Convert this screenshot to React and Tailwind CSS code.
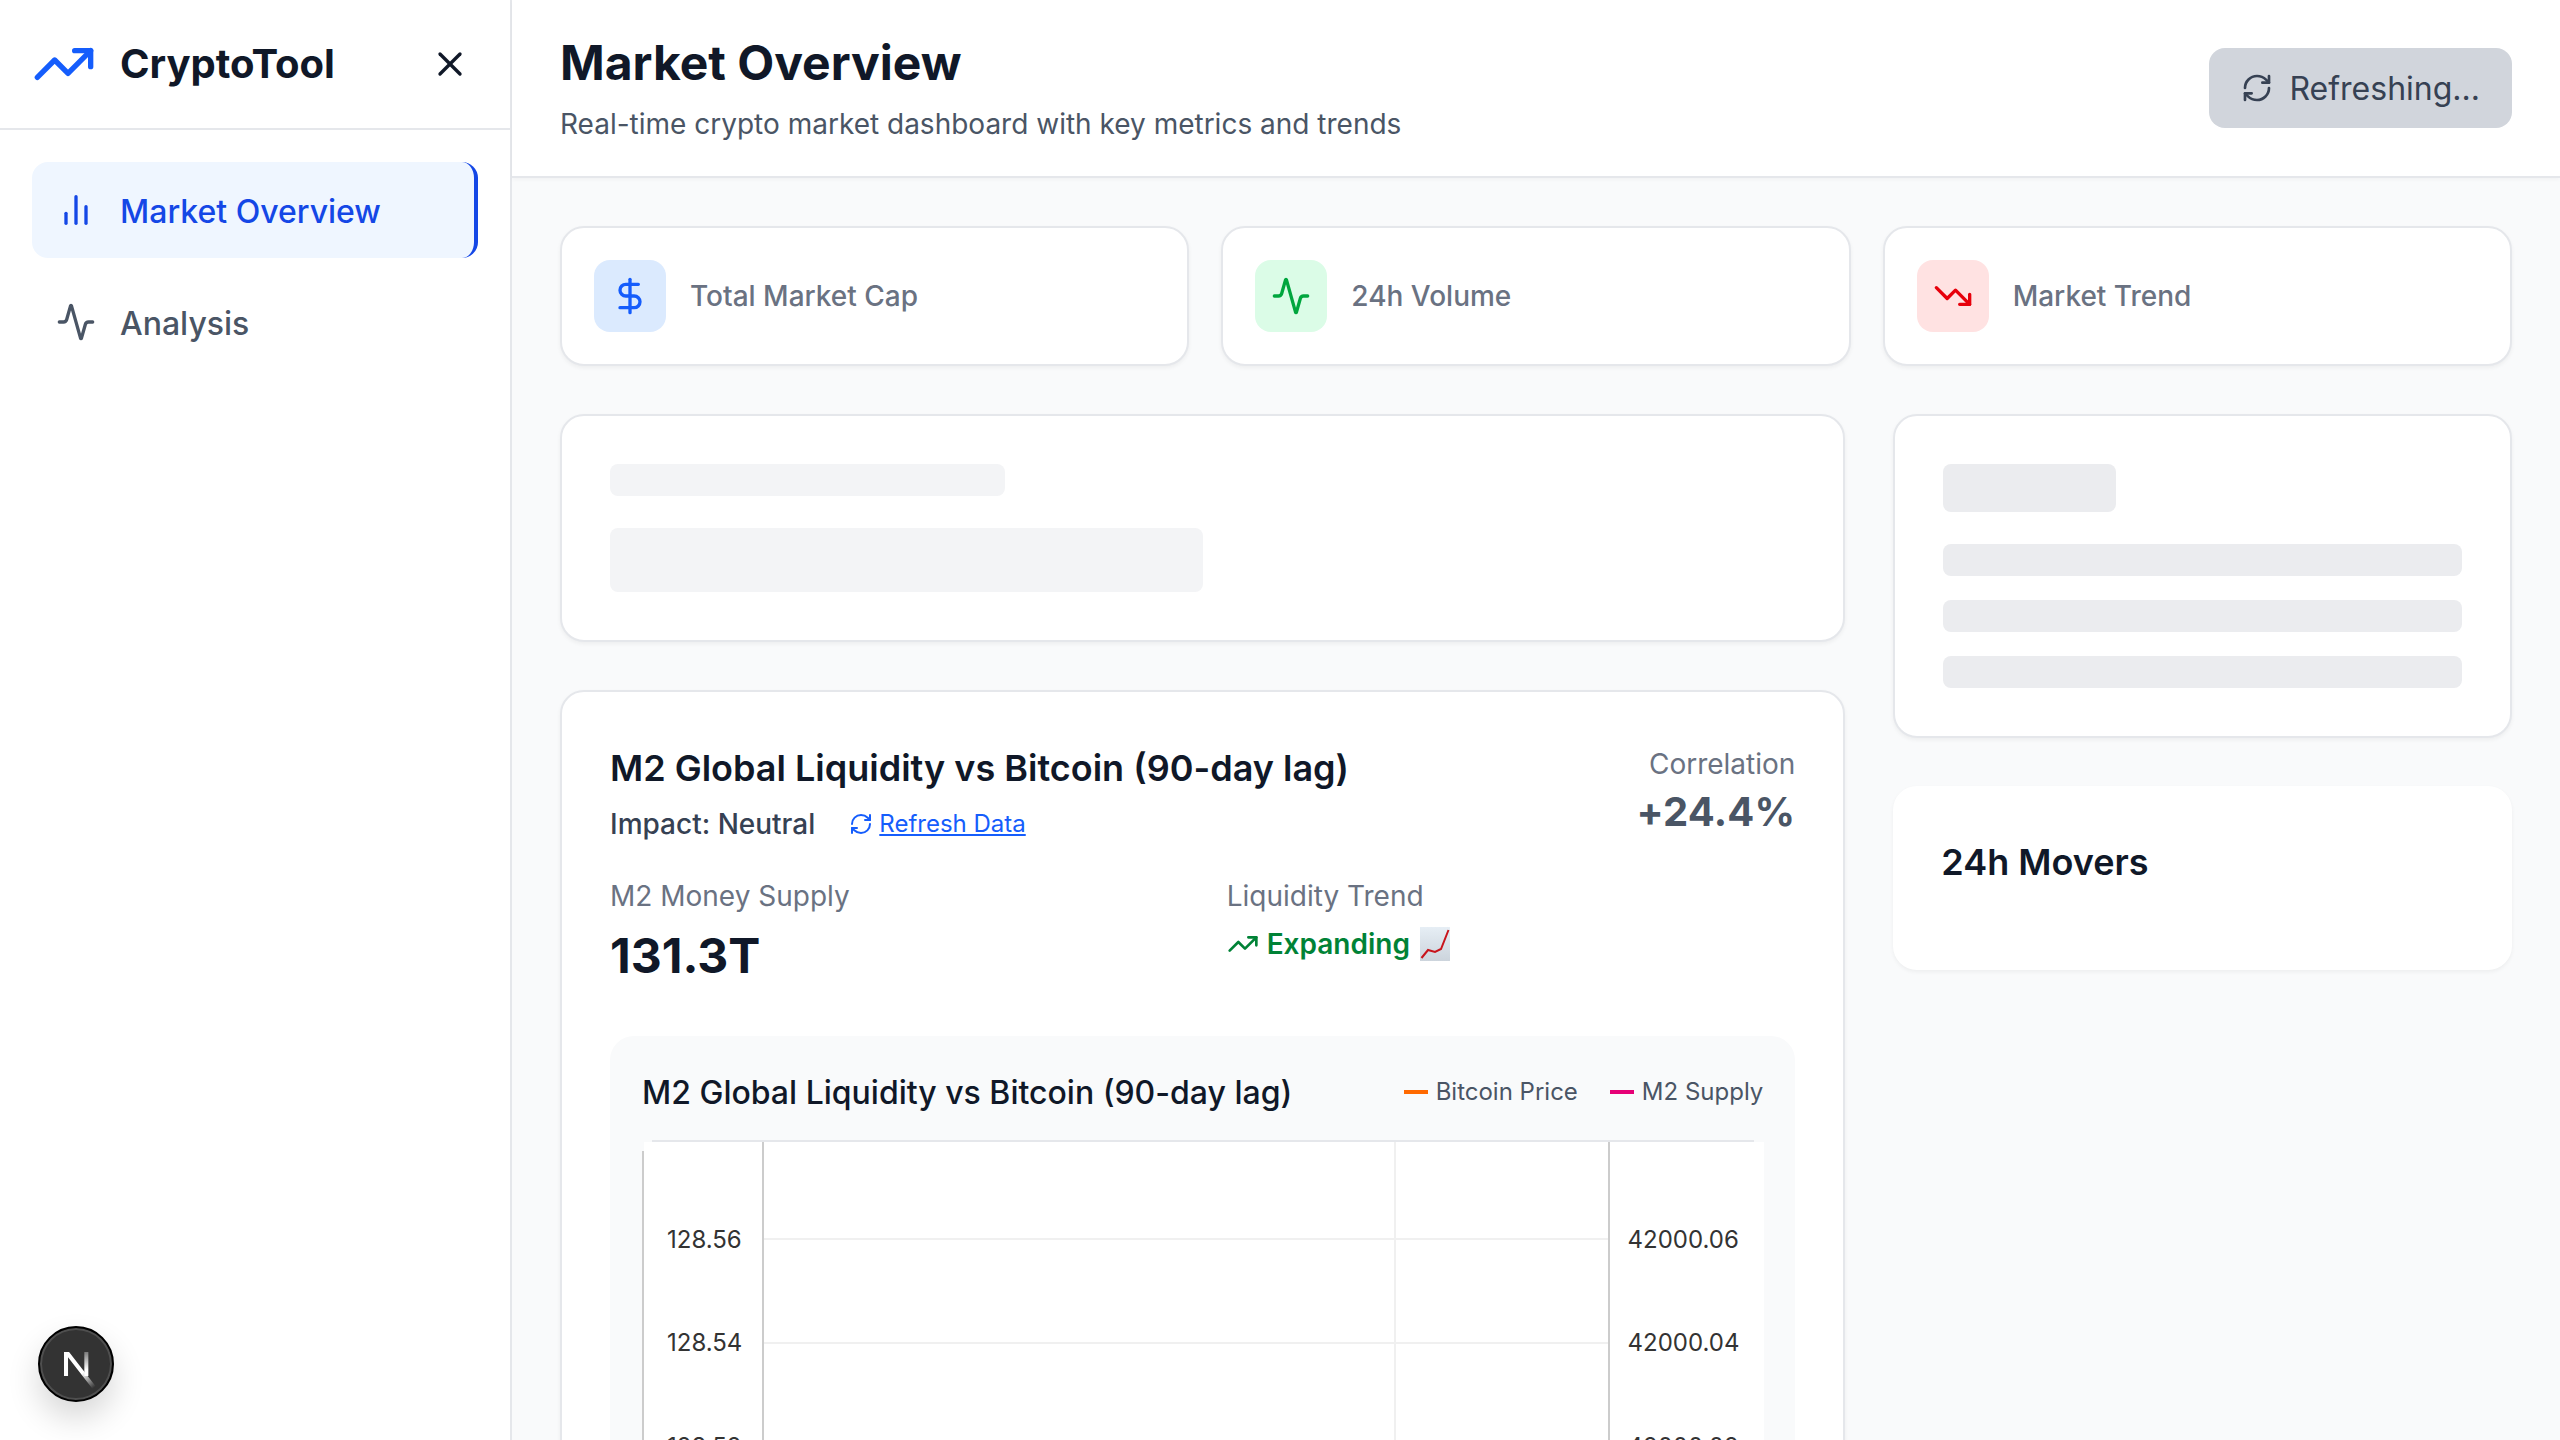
import React from "react";
import { X, DollarSign, TrendingUp, TrendingDown, RefreshCw } from "lucide-react";

const font = { fontFamily: "Inter, sans-serif" };

function BarsIcon({ className }) {
  return (
    <svg viewBox="0 0 24 24" fill="none" stroke="currentColor" strokeWidth="2" strokeLinecap="round" strokeLinejoin="round" className={className}>
      <path d="M18 20V10" />
      <path d="M12 20V4" />
      <path d="M6 20v-6" />
    </svg>
  );
}

function PulseIcon({ className }) {
  return (
    <svg viewBox="0 0 24 24" fill="none" stroke="currentColor" strokeWidth="2" strokeLinecap="round" strokeLinejoin="round" className={className}>
      <path d="M22 12h-2.48a2 2 0 0 0-1.93 1.46l-2.35 8.36a.25.25 0 0 1-.48 0L9.24 2.18a.25.25 0 0 0-.48 0l-2.35 8.36A2 2 0 0 1 4.49 12H2" />
    </svg>
  );
}

function ChartEmoji() {
  return (
    <svg viewBox="0 0 30 34" className="ml-[10px] h-[34px] w-[30px]">
      <defs>
        <linearGradient id="emojiBg" x1="0" y1="0" x2="0" y2="1">
          <stop offset="0" stopColor="#e6eef5" />
          <stop offset="1" stopColor="#ccd4dc" />
        </linearGradient>
      </defs>
      <rect width="30" height="34" fill="url(#emojiBg)" />
      <path d="M1.5 31 L8 23 L15 25 L21 22 L28.5 3" fill="none" stroke="#c8141c" strokeWidth="2" />
    </svg>
  );
}

function StatCard({ icon, tint, label }) {
  return (
    <div className="flex items-center gap-6 rounded-3xl border-2 border-gray-200 bg-white p-8 shadow-[0_2px_4px_rgba(0,0,0,0.05)]">
      <div className={`flex h-[72px] w-[72px] items-center justify-center rounded-2xl ${tint}`}>{icon}</div>
      <p className="text-[28px] leading-10 font-medium text-gray-500">{label}</p>
    </div>
  );
}

function LiquidityChart() {
  return (
    <svg viewBox="0 0 1122 502" className="h-[502px] w-[1122px]">
      <rect x="2" y="3" width="1120" height="499" fill="#ffffff" />
      <path d="M10 2H1112" stroke="#e5e7eb" strokeWidth="2" />
      <path d="M1 12V502" stroke="#cccccc" strokeWidth="2" />
      <path d="M122 100H967M122 204H967M753 3V502" stroke="#f0f0f0" strokeWidth="2" />
      <path d="M121 3V502M967 3V502" stroke="#cccccc" strokeWidth="2" />
      <g fontFamily="Inter, sans-serif" fontSize="24" fill="#333333">
        <text x="25" y="109">128.56</text>
        <text x="25" y="212">128.54</text>
        <text x="25" y="316">128.52</text>
        <text x="985.5" y="109">42000.06</text>
        <text x="985.5" y="212">42000.04</text>
        <text x="985.5" y="316">42000.02</text>
      </g>
    </svg>
  );
}

export default function App() {
  return (
    <div style={font} className="relative flex h-screen overflow-hidden bg-gray-50">
      <aside className="flex w-[512px] shrink-0 flex-col border-r-2 border-gray-200 bg-white">
        <div className="flex h-[130px] items-center justify-between border-b-2 border-gray-200 px-8">
          <div className="flex items-center gap-6">
            <TrendingUp size={64} className="text-blue-600" />
            <span className="text-[40px] leading-[56px] font-bold text-gray-900">CryptoTool</span>
          </div>
          <button className="p-2 text-gray-900">
            <X size={40} />
          </button>
        </div>
        <nav className="flex flex-col gap-4 px-8 pt-8">
          <a className="flex h-24 items-center gap-6 rounded-2xl border-r-4 border-blue-700 bg-blue-50 px-6 text-[32px] font-medium text-blue-700">
            <BarsIcon className="h-10 w-10" />
            <span className="pt-[3px]">Market Overview</span>
          </a>
          <a className="flex h-24 items-center gap-6 rounded-2xl px-6 text-[32px] font-medium text-gray-600">
            <PulseIcon className="h-10 w-10" />
            <span className="pt-[3px]">Analysis</span>
          </a>
        </nav>
      </aside>

      <main className="flex min-w-0 flex-1 flex-col">
        <header className="flex shrink-0 items-center justify-between border-b-2 border-gray-200 bg-white px-12 py-8 shadow-[0_2px_4px_rgba(0,0,0,0.03)]">
          <div>
            <h1 className="-mt-px text-5xl leading-[64px] font-bold text-gray-900">Market Overview</h1>
            <p className="mt-[9px] text-[28px] leading-10 text-gray-600">Real-time crypto market dashboard with key metrics and trends</p>
          </div>
          <button className="flex items-center gap-4 rounded-2xl bg-gray-300 px-8 py-4 text-[32px] leading-12 text-gray-700">
            <RefreshCw size={32} />
            <span className="pt-[2px] leading-[46px]">Refreshing...</span>
          </button>
        </header>

        <div className="flex-1 overflow-hidden p-12">
          <div className="grid grid-cols-3 gap-8">
            <StatCard tint="bg-blue-100" label="Total Market Cap" icon={<DollarSign size={40} className="text-blue-600" />} />
            <StatCard tint="bg-green-100" label="24h Volume" icon={<PulseIcon className="h-10 w-10 text-green-600" />} />
            <StatCard tint="bg-red-100" label="Market Trend" icon={<TrendingDown size={40} className="text-red-600" />} />
          </div>

          <div className="mt-12 grid grid-cols-3 items-start gap-12">
            <div className="col-span-2 flex flex-col gap-12">
              <div className="rounded-3xl border-2 border-gray-200 bg-white p-12 shadow-[0_2px_4px_rgba(0,0,0,0.05)]">
                <div className="h-8 w-1/3 rounded-lg bg-gray-100" />
                <div className="mt-8 h-16 w-1/2 rounded-lg bg-gray-100" />
              </div>

              <div className="rounded-3xl border-2 border-gray-200 bg-white p-12 shadow-[0_2px_4px_rgba(0,0,0,0.05)]">
                <div className="flex items-start justify-between">
                  <div>
                    <h2 className="text-4xl leading-14 font-semibold text-gray-900">M2 Global Liquidity vs Bitcoin (90-day lag)</h2>
                    <div className="mt-2 flex items-center gap-[34px]">
                      <span className="text-[28px] leading-10 font-medium text-gray-700">Impact: Neutral</span>
                      <a className="flex items-center gap-[6px] text-2xl text-blue-600">
                        <RefreshCw size={24} />
                        <span className="underline">Refresh Data</span>
                      </a>
                    </div>
                  </div>
                  <div className="pt-1 text-right">
                    <p className="text-[28px] leading-10 text-gray-500">Correlation</p>
                    <p className="text-[40px] leading-14 font-bold tracking-[0.2px] text-gray-600">+24.4%</p>
                  </div>
                </div>

                <div className="mt-8 grid grid-cols-2 gap-12">
                  <div>
                    <p className="text-[28px] leading-10 text-gray-500">M2 Money Supply</p>
                    <p className="mt-2 text-5xl leading-16 font-bold text-gray-900">131.3T</p>
                  </div>
                  <div>
                    <p className="text-[28px] leading-10 text-gray-500">Liquidity Trend</p>
                    <div className="mt-2 flex h-10 items-center text-[28px] font-semibold text-green-700">
                      <TrendingUp size={32} className="mr-2" />
                      Expanding
                      <ChartEmoji />
                    </div>
                  </div>
                </div>

                <div className="mt-12 rounded-3xl bg-gray-50 px-8 pt-7">
                  <div className="flex h-14 items-center justify-between">
                    <h3 className="pt-[2px] text-[32px] leading-[54px] font-medium text-gray-900">M2 Global Liquidity vs Bitcoin (90-day lag)</h3>
                    <div className="flex gap-8 text-2xl text-gray-600">
                      <span className="flex items-center gap-2">
                        <span className="h-1 w-6 bg-orange-500" />
                        Bitcoin Price
                      </span>
                      <span className="flex items-center gap-2">
                        <span className="h-1 w-6 bg-pink-600" />
                        M2 Supply
                      </span>
                    </div>
                  </div>
                  <div className="mt-[19px]">
                    <LiquidityChart />
                  </div>
                </div>
              </div>
            </div>

            <div className="flex flex-col gap-12">
              <div className="rounded-3xl border-2 border-gray-200 bg-white p-12 shadow-[0_2px_4px_rgba(0,0,0,0.05)]">
                <div className="h-12 w-1/3 rounded-lg bg-[#ebecef]" />
                <div className="mt-8 flex flex-col gap-6">
                  <div className="h-8 rounded-lg bg-[#ebecef]" />
                  <div className="h-8 rounded-lg bg-[#ebecef]" />
                  <div className="h-8 rounded-lg bg-[#ebecef]" />
                </div>
              </div>
              <div className="h-[184px] rounded-3xl bg-white p-12 shadow-[0_2px_4px_rgba(0,0,0,0.05)]">
                <h2 className="text-4xl leading-14 font-semibold text-gray-900">24h Movers</h2>
              </div>
            </div>
          </div>
        </div>
      </main>

      <div className="absolute bottom-[38px] left-[38px] flex h-[76px] w-[76px] items-center justify-center rounded-full border-2 border-black bg-[#333333] shadow-[0_16px_32px_rgba(0,0,0,0.16),inset_0_0_0_2px_rgba(255,255,255,0.14)]">
        <svg viewBox="0 0 180 180" className="h-[60px] w-[60px]">
          <defs>
            <linearGradient id="nDiag" gradientUnits="userSpaceOnUse" x1="109" y1="116.5" x2="144.5" y2="160.5">
              <stop stopColor="#ffffff" />
              <stop offset="1" stopColor="#ffffff" stopOpacity="0" />
            </linearGradient>
            <linearGradient id="nBar" gradientUnits="userSpaceOnUse" x1="121" y1="54" x2="121" y2="106.9">
              <stop stopColor="#ffffff" stopOpacity="0.35" />
              <stop offset="1" stopColor="#ffffff" />
            </linearGradient>
          </defs>
          <path d="M149.508 157.52L69.142 54H54V125.97H66.1136V69.3836L139.999 164.845C143.333 162.614 146.509 160.165 149.508 157.52Z" fill="url(#nDiag)" />
          <rect x="115" y="54" width="12" height="72" fill="url(#nBar)" />
        </svg>
      </div>
    </div>
  );
}
